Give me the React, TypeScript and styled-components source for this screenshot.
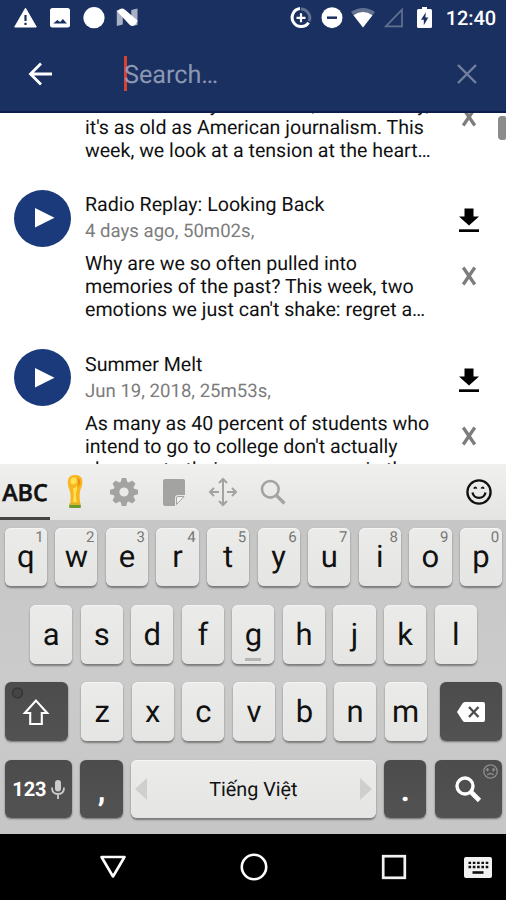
import React from "react";
import styled, { createGlobalStyle } from "styled-components";

const GlobalStyle = createGlobalStyle`
  * { box-sizing: border-box; }
  body { margin: 0; background: #000; font-family: Roboto, "Liberation Sans", sans-serif; text-rendering: geometricPrecision; }
  svg { display: block; overflow: visible; flex: none; }
`;

const Screen = styled.div`
  width: 506px;
  height: 900px;
  display: flex;
  flex-direction: column;
  overflow: hidden;
  background: #fff;
`;

/* ---------- header ---------- */

const StatusBar = styled.header`
  height: 36px;
  flex: none;
  display: flex;
  justify-content: space-between;
  align-items: center;
  padding: 0 10px 0 14px;
  background: #1a3060;
`;

const Notifications = styled.div`
  display: flex;
  gap: 13px;
`;

const SystemIcons = styled.div`
  display: grid;
  grid-template-columns: 31px 31px 31px 29px 33px auto;
  justify-items: center;
  align-items: center;
`;

const Clock = styled.span`
  font-size: 20px;
  font-weight: 500;
  line-height: 36px;
  color: #fff;
  letter-spacing: -0.1px;
  margin-left: 5px;
`;

const AppBar = styled.div`
  height: 77px;
  flex: none;
  display: flex;
  align-items: center;
  padding: 0 28px;
  background: #1a3060;
  border-bottom: 2px solid #0c1a4c;
`;

const SearchField = styled.div`
  flex: 1;
  height: 35px;
  margin-left: 72px;
  border-left: 3px solid #d8402f;
  display: flex;
  align-items: center;
`;

const Placeholder = styled.span`
  font-size: 25.2px;
  line-height: 35px;
  color: #8c97b3;
  margin: 3px 0 0 -3px;
`;

/* ---------- episodes ---------- */

const ListViewport = styled.main`
  position: relative;
  height: 351px;
  flex: none;
  overflow: hidden;
  background: #fff;
`;

const List = styled.div`
  display: flex;
  flex-direction: column;
  margin-top: -30.5px;
`;

const ScrollThumb = styled.div`
  position: absolute;
  right: 0;
  top: 3px;
  width: 8px;
  height: 24px;
  border-radius: 4px 2px 2px 4px;
  background: #8c8c8c;
`;

const Episode = styled.article<{ $partial: boolean }>`
  height: ${(p) => (p.$partial ? 107.5 : 159.5)}px;
  display: grid;
  grid-template-columns: 56px 360px 46px;
  column-gap: 15px;
  padding: 2px 0 0 14px;
`;

const PlayButton = styled.button`
  width: 57px;
  height: 57px;
  margin-top: -2.5px;
  padding: 0;
  border: 0;
  border-radius: 50%;
  background: #1b3a7b;
  display: flex;
  align-items: center;
  justify-content: center;
`;

const EpisodeBody = styled.div`
  grid-column: 2;
`;

const EpisodeTitle = styled.h2`
  margin: 0;
  font-size: 19.6px;
  font-weight: 400;
  line-height: 26px;
  color: #111;
  white-space: nowrap;
`;

const EpisodeMeta = styled.p`
  margin: 0;
  font-size: 18.6px;
  font-weight: 400;
  line-height: 26px;
  color: #7c7c7c;
  white-space: nowrap;
`;

const EpisodeText = styled.p`
  margin: 8px 0 0;
  font-size: 19.6px;
  line-height: 23px;
  color: #111;
  white-space: pre;
`;

const EpisodeActions = styled.div<{ $partial: boolean }>`
  display: flex;
  flex-direction: column;
  align-items: center;
  padding: ${(p) => (p.$partial ? 23 : 16)}px 28px 0 0;
  gap: 34px;
`;

/* ---------- keyboard ---------- */

const ToolStrip = styled.div`
  height: 56px;
  flex: none;
  display: flex;
  align-items: center;
  background: linear-gradient(#f0f0ef, #e4e4e2);
`;

const AbcTab = styled.div`
  width: 50px;
  height: 56px;
  border-bottom: 3px solid #444;
  font-family: "Open Sans", "Noto Sans", sans-serif;
  font-weight: 600;
  font-size: 23.4px;
  line-height: 57px;
  text-align: center;
  color: #111;
  -webkit-text-stroke: 0.5px #111;
`;

const Tool = styled.div<{ $end?: boolean }>`
  width: ${(p) => (p.$end ? 55 : 49.5)}px;
  height: 56px;
  display: flex;
  align-items: center;
  justify-content: center;
  margin-left: ${(p) => (p.$end ? "auto" : "0")};
`;

const Keys = styled.section`
  height: 314px;
  flex: none;
  display: flex;
  flex-direction: column;
  gap: 18.6px;
  padding: 7.5px 3.8px 0 4.6px;
  background: linear-gradient(#c6c6c6, #cbcbcb 50%, #c6c6c6);
`;

const KeyRow = styled.div<{ $inset?: number }>`
  height: 58.8px;
  display: flex;
  justify-content: space-between;
  padding: 0 ${(p) => p.$inset ?? 0}px;
`;

const KeyGroup = styled.div`
  display: flex;
  gap: 8.4px;
`;

const Key = styled.div<{ $dark?: boolean; $w?: number }>`
  position: relative;
  width: ${(p) => p.$w ?? 42.2}px;
  height: 58.8px;
  flex: none;
  display: flex;
  align-items: center;
  justify-content: center;
  border-radius: 6px;
  font-size: 31px;
  color: ${(p) => (p.$dark ? "#fff" : "#111")};
  background: ${(p) => (p.$dark ? "linear-gradient(#4c4c4c, #525252)" : "linear-gradient(#ebebe9, #e5e5e3)")};
  box-shadow: ${(p) =>
    p.$dark
      ? "0 1px 2px rgba(0,0,0,.45)"
      : "0 1.5px 2px rgba(0,0,0,.4), inset 0 1px 1px #f5f5f4"};
`;

const Letter = styled.span`
  line-height: 36px;
  margin-top: 1px;
`;

const Hint = styled.span`
  position: absolute;
  top: 0;
  right: 3px;
  font-size: 15px;
  line-height: 19px;
  color: #777;
`;

const HomeMark = styled.span`
  position: absolute;
  bottom: 2.5px;
  left: 13px;
  width: 16px;
  height: 3px;
  background: #b5b5b5;
`;

const Corner = styled.span<{ $side: "left" | "right" }>`
  position: absolute;
  top: 4px;
  ${(p) => p.$side}: 4px;
`;

const SpaceKey = styled(Key)`
  justify-content: space-between;
  padding: 0 4px;
  font-size: 19.8px;
`;

const Digits = styled.span`
  font-size: 20px;
  font-weight: 700;
  margin-right: 4px;
`;

const Punct = styled.span`
  font-size: 31px;
  font-weight: 700;
  line-height: 36px;
  margin-top: 3px;
`;

/* ---------- navigation ---------- */

const NavBar = styled.nav`
  height: 66px;
  flex: none;
  display: grid;
  grid-template-columns: 183px 141px 140px 28px;
  align-items: center;
  background: #000;
`;

const NavItem = styled.div<{ $first?: boolean }>`
  display: flex;
  justify-content: center;
  padding-left: ${(p) => (p.$first ? 43 : 0)}px;
`;

const Download = () => (
  <svg width="20" height="25" viewBox="0 0 20 25">
    <path d="M5.5 0.5h9v8H20L10 17.5 0 8.5h5.5z" fill="#000" />
    <path d="M0 21.3h20v2.7H0z" fill="#000" />
  </svg>
);

const Remove = () => (
  <svg width="16" height="18" viewBox="0 0 16 18">
    <path d="M2.2 .5l11.600 17M13.800 .5L2.200 17.500" stroke="#7d7d7d" strokeWidth="3.3" />
  </svg>
);

const Smile = ({ size, color, sad }: { size: number; color: string; sad?: boolean }) => (
  <svg width={size} height={size} viewBox="0 0 26 26" fill="none" stroke={color} strokeWidth="2.3">
    <circle cx="13" cy="13" r="11.6" />
    {sad ? (
      <path d="M7.5 19q5.5-5 11 0M8 7v6M18 7v6M5 10h5M16 10h5" />
    ) : (
      <>
        <path d="M6.5 13.5a6.6 6.6 0 0 0 13 0" />
        <path d="M8 9.6q1.3-2.4 2.6 0M15.4 9.6q1.3-2.4 2.6 0" strokeWidth="1.8" />
      </>
    )}
  </svg>
);

type EpisodeData = { title?: string; meta?: string; text: string };

// The first entry is scrolled partly out of view, so only its description remains.
const episodes: EpisodeData[] = [
  {
    text: "Fake news may seem new, but in reality,\nit's as old as American journalism. This\nweek, we look at a tension at the heart…",
  },
  {
    title: "Radio Replay: Looking Back",
    meta: "4 days ago, 50m02s,",
    text: "Why are we so often pulled into\nmemories of the past? This week, two\nemotions we just can't shake: regret a…",
  },
  {
    title: "Summer Melt",
    meta: "Jun 19, 2018, 25m53s,",
    text: "As many as 40 percent of students who\nintend to go to college don't actually\nshow up to their new campuses in the…",
  },
];

const gearTeeth = [0, 45, 90, 135, 180, 225, 270, 315];

export default function App() {
  return (
    <>
      <GlobalStyle />
      <Screen>
        <StatusBar>
          <Notifications>
            <svg width="23" height="22" viewBox="0 0 23 22">
              <path d="M11.5 1.2L22.3 20H.7z" fill="#fff" stroke="#fff" strokeLinejoin="round" />
              <path d="M11.5 8v6M11.5 15.7v2.4" stroke="#1a3060" strokeWidth="2.2" />
            </svg>
            <svg width="20" height="22" viewBox="0 0 20 22">
              <rect y="1" width="20" height="19.5" rx="2.5" fill="#fff" />
              <path d="M3.3 16.5l4-3.600 2.800 2 2.800-2.800 4 4.400z" fill="#1a3060" />
            </svg>
            <svg width="22" height="22" viewBox="0 0 22 22">
              <circle cx="11" cy="10.7" r="10.6" fill="#fff" />
            </svg>
            <svg width="21" height="22" viewBox="1.2 0 21 22">
              <path d="M0 3h6v14.500L0 19zM14.500 3l6.200-1.500V18l-6.200 1z" fill="#a9b1c4" />
              <path d="M.5 4.500Q4-.5 8.500 3L20.700 13.500q-2.500 7.500-7.700 4.500z" fill="#fff" />
            </svg>
          </Notifications>
          <SystemIcons>
            <svg width="22" height="22" viewBox="0 0 22 22" fill="none" strokeWidth="3">
              <path d="M11 2a9 9 0 0 1 8.2 12.2" stroke="#62718f" />
              <path d="M10 1.6a9 9 0 1 0 8.6 14" stroke="#fff" />
              <path d="M11 6.3v9M6.5 10.8h9" stroke="#fff" strokeWidth="2.2" />
            </svg>
            <svg width="22" height="22" viewBox="0 0 22 22">
              <circle cx="11" cy="10.7" r="10.5" fill="#fff" />
              <path d="M6 10.7h10" stroke="#1a3060" strokeWidth="2.5" />
            </svg>
            <svg width="24" height="22" viewBox="0 0 24 22">
              <path d="M12 20.5L0 5Q12-3 24 5z" fill="#62718f" />
              <path d="M12 20.5L2.5 8.2Q12 1.8 21.5 8.2z" fill="#fff" />
            </svg>
            <svg width="19" height="22" viewBox="0 0 19 22">
              <path d="M1.8 19.4H18V2.7z" fill="none" stroke="#62718f" strokeWidth="1.7" />
            </svg>
            <svg width="15" height="22" viewBox="0 0 15 22">
              <path d="M5 0h5v2h3.5Q15 2 15 3.5v16Q15 21 13.5 21h-12Q0 21 0 19.5v-16Q0 2 1.5 2H5z" fill="#fff" />
              <path d="M8.8 5.2L4 12.7h2.8v5.6l4.5-7.7H8.4z" fill="#1a3060" />
            </svg>
            <Clock>12:40</Clock>
          </SystemIcons>
        </StatusBar>
        <AppBar>
          <svg width="24" height="24" viewBox="0 0 24 24" fill="none" stroke="#fff" strokeWidth="2.8">
            <path d="M24 12H3M13 1.5L2.5 12 13 22.5" />
          </svg>
          <SearchField>
            <Placeholder>Search…</Placeholder>
          </SearchField>
          <svg width="22" height="20" viewBox="0 0 22 20">
            <path d="M2 1l18 18M20 1L2 19" stroke="#74819e" strokeWidth="2.4" />
          </svg>
        </AppBar>

        <ListViewport>
          <List>
            {episodes.map((e) => (
              <Episode key={e.text} $partial={!e.title}>
                {e.title && (
                  <PlayButton aria-label="Play">
                    <svg width="20" height="20" viewBox="-0.5 0 20 20">
                      <path d="M1.5 0L21 9.8 1.5 19.6z" fill="#fff" />
                    </svg>
                  </PlayButton>
                )}
                <EpisodeBody>
                  {e.title && <EpisodeTitle>{e.title}</EpisodeTitle>}
                  {e.meta && <EpisodeMeta>{e.meta}</EpisodeMeta>}
                  <EpisodeText>{e.text}</EpisodeText>
                </EpisodeBody>
                <EpisodeActions $partial={!e.title}>
                  {e.title && <Download />}
                  <Remove />
                </EpisodeActions>
              </Episode>
            ))}
          </List>
          <ScrollThumb />
        </ListViewport>

        <ToolStrip>
          <AbcTab>ABC</AbcTab>
          <Tool>
            <svg width="16" height="34" viewBox="0 0 18 34" preserveAspectRatio="none">
              <path d="M1.500 4Q3 0 9 0q7 0 8.2 5 .8 5-2.200 10-1.500 5 0 14H3.500Q5 20 2.800 15-.2 8 1.500 4z" fill="#f7b51f" />
              <path d="M4 4q3-3 6-1 2 4-1 6-4 1-5-1zM7 13q4 0 4-4 1 5-1 9 0 6 1 9H7q1-8 0-14z" fill="#ffe253" />
              <path d="M12 3q3 1 3 5l-3 5q1-6 0-10z" fill="#e88f13" />
              <path d="M2.500 29.500h13V33h-13z" fill="#6b9a28" />
              <path d="M3 28h12v2H3z" fill="#d8b52a" />
            </svg>
          </Tool>
          <Tool>
            <svg width="28" height="28" viewBox="-14 -14 28 28" fill="#a3a3a2">
              {gearTeeth.map((a) => (
                <path key={a} d="M-3.6 -9L-2.2 -14H2.2L3.6 -9z" transform={`rotate(${a})`} />
              ))}
              <circle r="7.6" fill="none" stroke="#a3a3a2" strokeWidth="6" />
            </svg>
          </Tool>
          <Tool>
            <svg width="22" height="27" viewBox="0 0 22 27">
              <path d="M2 0h18q2 0 2 2v14h-7q-3 0-3 3v8H2q-2 0-2-2V2q0-2 2-2z" fill="#a3a3a2" />
              <path d="M13.500 25.500V19q0-1.500 1.500-1.500h6z" fill="#f2f2f1" stroke="#a3a3a2" strokeWidth="1" />
            </svg>
          </Tool>
          <Tool>
            <svg width="28" height="28" viewBox="0 0 28 28" fill="none" stroke="#a3a3a2" strokeWidth="2">
              <path d="M14 2v24M2 14h8M18 14h8" />
              <path d="M10 5l4-4 4 4M10 23l4 4 4-4M5 10l-4 4 4 4M23 10l4 4-4 4" />
            </svg>
          </Tool>
          <Tool>
            <svg width="26" height="26" viewBox="0 0 26 26" fill="none" stroke="#a3a3a2">
              <circle cx="10.300" cy="10.300" r="8.300" strokeWidth="2.6" />
              <path d="M16 16l8.500 8.500" strokeWidth="3.200" />
            </svg>
          </Tool>
          <Tool $end>
            <Smile size={26} color="#111" />
          </Tool>
        </ToolStrip>

        <Keys>
          <KeyRow>
            {"qwertyuiop".split("").map((c, i) => (
              <Key key={c}>
                <Letter>{c}</Letter>
                <Hint>{(i + 1) % 10}</Hint>
              </Key>
            ))}
          </KeyRow>
          <KeyRow $inset={25.4}>
            {"asdfghjkl".split("").map((c) => (
              <Key key={c}>
                <Letter>{c}</Letter>
                {c === "g" && <HomeMark />}
              </Key>
            ))}
          </KeyRow>
          <KeyRow>
            <Key $dark $w={63}>
              <Corner $side="left">
                <svg width="16" height="14" viewBox="0 0 16 14">
                  <circle cx="8.500" cy="7" r="5" fill="#454545" stroke="#363636" strokeWidth="1.500" />
                </svg>
              </Corner>
              <svg width="26" height="26" viewBox="0 0 26 26">
                <path d="M13 1.600L24.200 14H18.800v11H7.200V14H1.800z" fill="none" stroke="#fff" strokeWidth="2.100" />
              </svg>
            </Key>
            <KeyGroup>
              {"zxcvbnm".split("").map((c) => (
                <Key key={c}>
                  <Letter>{c}</Letter>
                </Key>
              ))}
            </KeyGroup>
            <Key $dark $w={62}>
              <svg width="28" height="20" viewBox="0 0 28 20">
                <path d="M8 0h18q2 0 2 2v16q0 2-2 2H8q-1.500 0-2.500-1.500L0 10l5.500-8.500Q6.500 0 8 0z" fill="#fff" />
                <path d="M12 5l9.500 10M21.500 5L12 15" stroke="#4c4c4c" strokeWidth="2.400" />
              </svg>
            </Key>
          </KeyRow>
          <KeyRow>
            <Key $dark $w={67.6}>
              <Digits>123</Digits>
              <svg width="14" height="19" viewBox="0 0 14 19">
                <rect x="4" y="0" width="6" height="11.500" rx="3" fill="#ccc" />
                <path d="M1 7.500q0 6.500 6 6.500t6-6.500M7 14v5" fill="none" stroke="#ccc" strokeWidth="1.800" />
              </svg>
            </Key>
            <Key $dark>
              <Punct>,</Punct>
            </Key>
            <SpaceKey $w={245}>
              <svg width="12" height="22" viewBox="0 0 12 22">
                <path d="M12 0v22L0 11z" fill="#cfcfce" />
              </svg>
              <span>Tiếng Việt</span>
              <svg width="12" height="22" viewBox="0 0 12 22">
                <path d="M0 0v22l12-11z" fill="#cfcfce" />
              </svg>
            </SpaceKey>
            <Key $dark>
              <Punct>.</Punct>
            </Key>
            <Key $dark $w={67.6}>
              <svg width="26" height="26" viewBox="0 0 26 26" fill="none" stroke="#fff">
                <circle cx="10" cy="10" r="8" strokeWidth="3.400" />
                <path d="M15.500 15.500l9 9" strokeWidth="4.600" />
              </svg>
              <Corner $side="right">
                <Smile size={15} color="#8c8c8c" sad />
              </Corner>
            </Key>
          </KeyRow>
        </Keys>

        <NavBar>
          <NavItem $first>
            <svg width="28" height="26" viewBox="0 0 28 26">
              <path d="M2.500 3h23L14 22.500z" fill="none" stroke="#fff" strokeWidth="2.600" strokeLinejoin="round" />
            </svg>
          </NavItem>
          <NavItem>
            <svg width="28" height="28" viewBox="0 0 28 28">
              <circle cx="14" cy="14" r="12.200" fill="none" stroke="#fff" strokeWidth="2.600" />
            </svg>
          </NavItem>
          <NavItem>
            <svg width="26" height="26" viewBox="0 0 26 26">
              <rect x="2.200" y="2.200" width="21.600" height="21.600" fill="none" stroke="#f2f2f2" strokeWidth="2.700" />
            </svg>
          </NavItem>
          <NavItem>
            <svg width="28" height="21" viewBox="0 0 28 21">
              <rect width="28" height="21" rx="2" fill="#f2f2f2" />
              <path d="M4.500 5.800h20M4.500 10h20" stroke="#111" strokeWidth="2.300" strokeDasharray="2.600 1.700" />
              <path d="M8.500 15.500h11" stroke="#111" strokeWidth="2.600" />
            </svg>
          </NavItem>
        </NavBar>
      </Screen>
    </>
  );
}
